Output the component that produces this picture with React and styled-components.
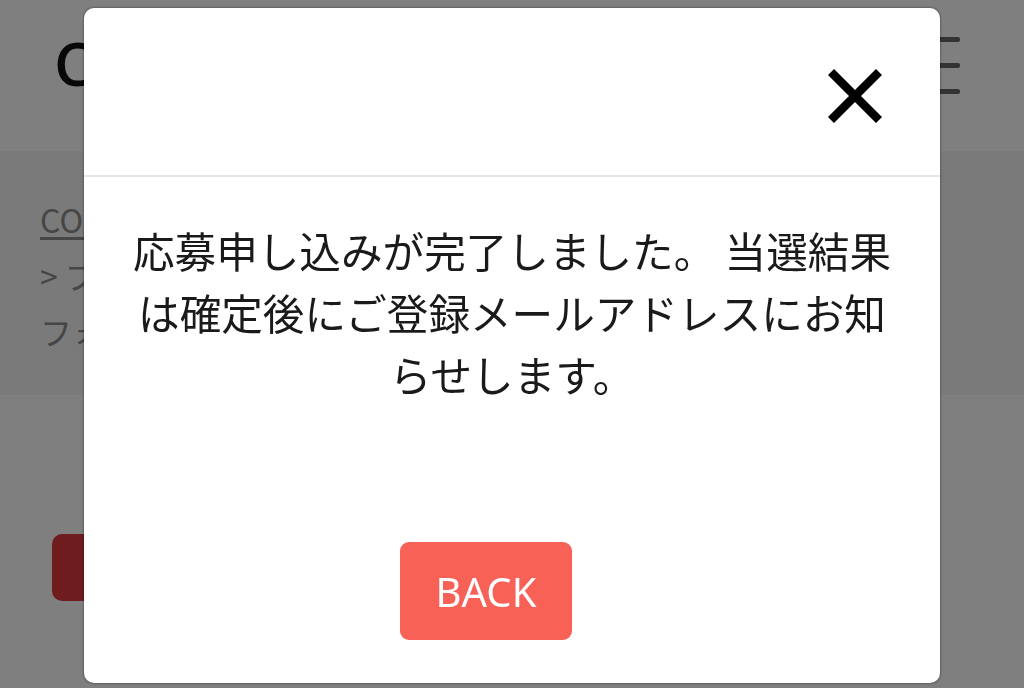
import React from 'react';
import styled, { createGlobalStyle } from 'styled-components';

const GlobalStyle = createGlobalStyle`
  html, body {
    margin: 0;
    padding: 0;
  }
  body {
    font-family: "Noto Sans", "Noto Sans CJK JP", sans-serif;
    background: #fff;
    overflow: hidden;
  }
  * {
    box-sizing: border-box;
  }
`;

// ページ本体（モーダルの下にあるもの）
const Page = styled.div`
  width: 1024px;
  height: 688px;
  display: flex;
  flex-direction: column;
`;

const Header = styled.header`
  height: 151px;
  display: flex;
  align-items: center;
  justify-content: space-between;
  padding: 0 64px 0 54px;
  background: #fff;
`;

const Logo = styled.div`
  font-family: "Open Sans", sans-serif;
  font-size: 60px;
  font-weight: 600;
  color: #111;
  letter-spacing: 2px;
  margin-top: -26px;
`;

const Burger = styled.div`
  width: 38px;
  display: flex;
  flex-direction: column;
  gap: 21px;
  margin-top: -20px;
`;

const BurgerLine = styled.span`
  display: block;
  height: 5px;
  border-radius: 2px;
  background: #666;
`;

const Breadcrumb = styled.nav`
  height: 244px;
  background: #f4f4f4;
  padding: 40px 40px 0;
  font-family: "Noto Sans CJK JP", sans-serif;
  font-size: 32px;
  line-height: 56px;
  color: #8c8c8c;
`;

const CrumbLink = styled.a`
  color: #8c8c8c;
  text-decoration: underline;
  text-underline-offset: 4px;
`;

const Content = styled.main`
  flex: 1;
  padding: 139px 52px 0;
`;

const RedButton = styled.button`
  width: 240px;
  height: 67px;
  border: none;
  border-radius: 10px;
  background: #dc383c;
`;

// モーダル
const Overlay = styled.div`
  position: fixed;
  inset: 0;
  background: rgba(0, 0, 0, 0.5);
`;

const Modal = styled.div`
  position: fixed;
  top: 8px;
  left: 84px;
  width: 856px;
  height: 675px;
  background: #fff;
  border-radius: 10px;
  box-shadow: 0 0 2px 1px rgba(0, 0, 0, 0.25);
  display: flex;
  flex-direction: column;
`;

const ModalHead = styled.div`
  height: 169px;
  display: flex;
  align-items: center;
  justify-content: flex-end;
  padding: 9px 58px 0 0;
  border-bottom: 2px solid #e2e6e9;
`;

const CloseButton = styled.button`
  width: 54px;
  height: 54px;
  padding: 0;
  border: none;
  background: none;
  cursor: pointer;
  display: flex;
`;

const Message = styled.p`
  margin: 0;
  padding: 42px 38px 0;
  text-align: center;
  font-family: "Noto Sans CJK JP", sans-serif;
  font-size: 41.6px;
  line-height: 62px;
  color: #1a1a1a;
`;

const ModalFoot = styled.div`
  margin-top: auto;
  padding: 0 52px 43px 0;
  display: flex;
  justify-content: center;
`;

const BackButton = styled.button`
  width: 172px;
  height: 98px;
  border: none;
  border-radius: 9px;
  background: #f86156;
  color: #fff;
  font-family: "Noto Sans", sans-serif;
  font-size: 40px;
  padding: 0;
  cursor: pointer;
`;

const App = () => {
  return (
    <>
      <GlobalStyle />
      <Page>
        <Header>
          <Logo>COZRE</Logo>
          <Burger>
            <BurgerLine />
            <BurgerLine />
            <BurgerLine />
          </Burger>
        </Header>
        <Breadcrumb>
          <CrumbLink href="#">COZRE</CrumbLink>
          <br />
          &gt; プ
          <br />
          フォ
        </Breadcrumb>
        <Content>
          <RedButton />
        </Content>
      </Page>
      <Overlay />
      <Modal>
        <ModalHead>
          <CloseButton aria-label="close">
            <svg width="54" height="54" viewBox="0 0 54 54">
              <path d="M3 3 L51 51 M51 3 L3 51" stroke="#000" strokeWidth="8.5" fill="none" />
            </svg>
          </CloseButton>
        </ModalHead>
        <Message>
          応募申し込みが完了しました。 当選結果は確定後にご登録メールアドレスにお知らせします。
        </Message>
        <ModalFoot>
          <BackButton>BACK</BackButton>
        </ModalFoot>
      </Modal>
    </>
  );
};

export default App;
